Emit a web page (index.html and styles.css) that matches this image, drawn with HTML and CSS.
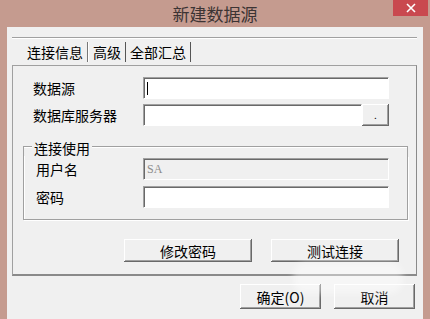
FILE: index.html
```html
<!DOCTYPE html>
<html lang="zh-CN">
<head>
  <meta charset="UTF-8" />
  <meta name="viewport" content="width=device-width, initial-scale=1" />
  <title>新建数据源</title>
  <link rel="stylesheet" href="styles.css">
</head>
<body>
  <div class="window">
    <header class="titlebar">
      <span></span>
      <h1 class="title">新建数据源</h1>
      <button class="close" type="button" aria-label="关闭">
        <svg width="10" height="10" viewBox="0 0 10 10"><path d="M1 1 L9 9 M9 1 L1 9" stroke="#fff" stroke-width="1.6" /></svg>
      </button>
    </header>

    <main class="client">
      <div class="tabline"></div>
      <nav class="tabs">
        <span class="tab">连接信息</span><span class="sep sep-active"></span>
        <span class="tab">高级</span><span class="sep"></span>
        <span class="tab">全部汇总</span><span class="sep"></span>
      </nav>

      <section class="panel">
        <div class="row">
          <label>数据源</label>
          <div class="input"><span class="caret"></span></div>
        </div>
        <div class="row">
          <label>数据库服务器</label>
          <div class="input-group">
            <div class="input"></div>
            <button class="btn browse" type="button">.</button>
          </div>
        </div>

        <div class="group">
          <div class="legend"><span>连接使用</span></div>
          <div class="group-body">
            <div class="row">
              <label>用户名</label>
              <div class="input disabled">SA</div>
            </div>
            <div class="row">
              <label>密码</label>
              <div class="input"></div>
            </div>
          </div>
        </div>

        <div class="actions">
          <button class="btn wide" type="button">修改密码</button>
          <button class="btn wide" type="button">测试连接</button>
        </div>
      </section>

      <div class="footer">
        <button class="btn dialog" type="button">确定(O)</button>
        <button class="btn dialog" type="button">取消</button>
        <div class="smudge"></div>
      </div>
    </main>
  </div>
</body>
</html>
```

FILE: styles.css
```css
:root {
  --frame: #c59b8f;
  --face: #f0f0f0;
  --shadow: #a0a0a0;
  --dark: #696969;
  --font: "Noto Sans CJK SC", "Liberation Sans", sans-serif;
}

* {
  box-sizing: border-box;
}

body {
  margin: 0;
  background: var(--frame);
  font-family: var(--font);
  font-size: 14px;
  color: #000;
}

.window {
  width: 430px;
  height: 319px;
  display: flex;
  flex-direction: column;
  overflow: hidden;
}

.titlebar {
  height: 27px;
  display: grid;
  grid-template-columns: 1fr auto 1fr;
}

.title {
  margin: 0;
  font-size: 17px;
  font-weight: 400;
  line-height: 27px;
  color: #3c3434;
}

.close {
  justify-self: end;
  width: 35px;
  height: 16px;
  margin-right: 2px;
  border: none;
  padding: 0;
  background: #c9494f;
  display: flex;
  align-items: center;
  justify-content: center;
}

.client {
  flex: 1;
  margin: 0 7px;
  background: var(--face);
  padding: 10px 6px 0 5px;
  display: flex;
  flex-direction: column;
}

.tabline {
  height: 2px;
  border-top: 1px solid var(--shadow);
  border-bottom: 1px solid #fff;
}

.tabs {
  height: 26px;
  display: flex;
  align-items: center;
  padding-left: 11px;
}

.tab {
  padding: 0 4px;
  line-height: 20px;
}

.sep {
  width: 1px;
  height: 20px;
  background: #555;
}

.sep-active {
  width: 2px;
  background: linear-gradient(to right, #777 50%, #fff 50%);
}

.panel {
  border: 1px solid var(--shadow);
  border-right-color: #8a8a8a;
  border-bottom: 2px solid #8a8a8a;
  padding: 11px 8px 10px 10px;
  height: 211px;
}

.row {
  display: grid;
  grid-template-columns: 110px 246px;
  align-items: center;
  padding-left: 10px;
  height: 22px;
}

.row + .row {
  margin-top: 5px;
}

.row label {
  line-height: 16px;
}

.input {
  height: 22px;
  background: #fff;
  border: 1px solid;
  border-color: var(--shadow) #fff #fff var(--shadow);
  box-shadow: inset 1px 1px 0 var(--dark);
  padding: 4px 3px;
  display: flex;
  align-items: center;
}

.input.disabled {
  background: var(--face);
  color: #8c8c8c;
  font-family: "Liberation Serif", serif;
  font-size: 12px;
}

.caret {
  width: 1px;
  height: 13px;
  background: #000;
}

.input-group {
  display: grid;
  grid-template-columns: 1fr 27px;
}

.btn {
  font-family: var(--font);
  font-size: 14px;
  color: #000;
  background: var(--face);
  border: none;
  padding: 0;
  box-shadow: inset -1px -1px 0 var(--dark), inset 1px 1px 0 #fff, inset -2px -2px 0 var(--shadow);
}

.browse {
  height: 22px;
  font-size: 10px;
  line-height: 10px;
}

/* group box: border line runs through the middle of the caption */
.group {
  margin-top: 14px;
  width: 385px;
}

.legend {
  height: 16px;
  display: flex;
  gap: 2px;
  line-height: 16px;
}

.legend::before,
.legend::after {
  content: "";
  height: 9px;
  align-self: flex-end;
  border-top: 1px solid var(--shadow);
  box-shadow: inset 0 1px 0 #fff;
}

.legend::before {
  width: 8px;
  border-left: 1px solid var(--shadow);
}

.legend::after {
  flex: 1;
  border-right: 1px solid var(--shadow);
}

.group-body {
  border: 1px solid var(--shadow);
  border-top: none;
  box-shadow: 1px 1px 0 #fff, inset 1px 0 0 #fff;
  padding: 2px 0 11px;
}

.group .row {
  grid-template-columns: 107px 246px;
  padding-left: 12px;
}

.group .row + .row {
  margin-top: 6px;
}

.actions {
  display: flex;
  gap: 19px;
  margin: 19px 0 0 101px;
}

.wide {
  width: 128px;
  height: 23px;
}

.footer {
  position: relative;
  display: flex;
  justify-content: flex-end;
  gap: 13px;
  margin-top: 8px;
  padding-right: 2px;
}

.dialog {
  width: 81px;
  height: 25px;
}

/* washed-out patch over the lower right corner of the shot */
.smudge {
  position: absolute;
  right: 14px;
  top: -22px;
  width: 110px;
  height: 32px;
  border-radius: 14px;
  background: rgba(255, 255, 255, 0.4);
  filter: blur(3px);
}
```
